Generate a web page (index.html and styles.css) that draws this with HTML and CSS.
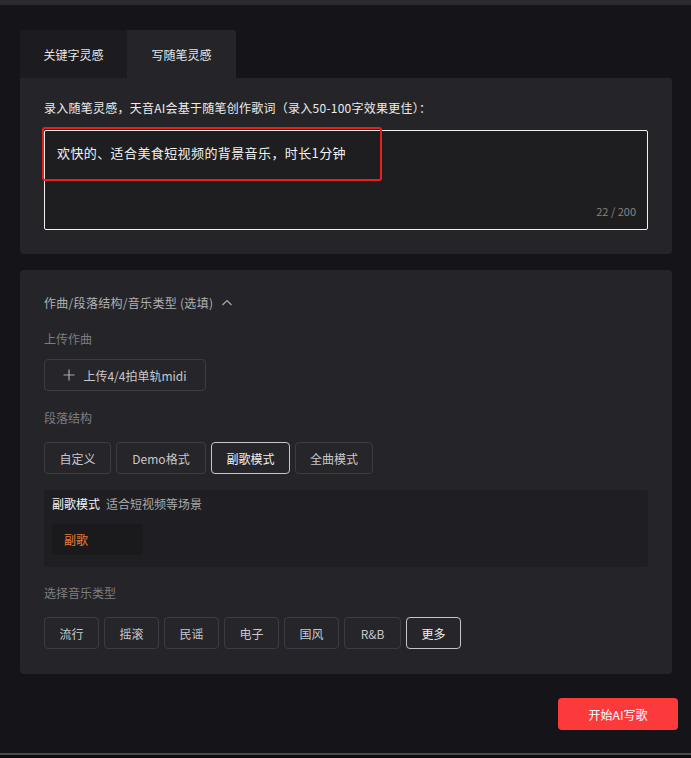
FILE: index.html
```html
<!DOCTYPE html>
<html lang="zh-CN">
<head>
    <meta charset="UTF-8">
    <meta name="viewport" content="width=device-width, initial-scale=1.0">
    <title>天音AI写歌</title>
    <link rel="stylesheet" href="styles.css">
</head>
<body>
    <div class="topbar"></div>
    <div class="page">
        <div class="tabs">
            <div class="tab">关键字灵感</div>
            <div class="tab active">写随笔灵感</div>
        </div>
        <div class="panel panel-input">
            <div class="label">录入随笔灵感，天音AI会基于随笔创作歌词（录入50-100字效果更佳）：</div>
            <div class="textarea">
                <div class="text">欢快的、适合美食短视频的背景音乐，时长1分钟</div>
                <div class="counter">22 / 200</div>
                <div class="highlight"></div>
            </div>
        </div>
        <div class="panel panel-options">
            <div class="section-title">作曲/段落结构/音乐类型 (选填)
                <svg class="chevron" width="12" height="12" viewBox="0 0 12 12"><path d="M1.5 8 L6 3.5 L10.5 8" fill="none" stroke="#aaa" stroke-width="1.2"/></svg>
            </div>
            <div class="sub-label">上传作曲</div>
            <button class="btn upload">
                <svg width="12" height="12" viewBox="0 0 12 12"><path d="M6 0.5 V11.5 M0.5 6 H11.5" stroke="#aaa" stroke-width="1.2"/></svg>
                上传4/4拍单轨midi
            </button>
            <div class="sub-label">段落结构</div>
            <div class="btn-row">
                <button class="btn seg w67">自定义</button>
                <button class="btn seg w90">Demo格式</button>
                <button class="btn seg w79 selected">副歌模式</button>
                <button class="btn seg w78">全曲模式</button>
            </div>
            <div class="mode-box">
                <div class="mode-head"><span class="mode-name">副歌模式</span>适合短视频等场景</div>
                <div class="chip">副歌</div>
            </div>
            <div class="sub-label">选择音乐类型</div>
            <div class="btn-row">
                <button class="btn genre">流行</button>
                <button class="btn genre">摇滚</button>
                <button class="btn genre">民谣</button>
                <button class="btn genre">电子</button>
                <button class="btn genre">国风</button>
                <button class="btn genre wide">R&amp;B</button>
                <button class="btn genre selected">更多</button>
            </div>
        </div>
        <div class="actions">
            <button class="start">开始AI写歌</button>
        </div>
    </div>
    <div class="bottombar"></div>
</body>
</html>
```

FILE: styles.css
```css
* {
    margin: 0;
    padding: 0;
    box-sizing: border-box;
}
body {
    width: 691px;
    height: 758px;
    overflow: hidden;
    background: #151419;
    font-family: "Noto Sans CJK SC", "Noto Sans", sans-serif;
    color: #e0e0e0;
    font-size: 12px;
}
.topbar {
    height: 5px;
    background: #2b2a2f;
}
.page {
    height: 748px;
    padding: 25px 19px 0 20px;
}
.tabs {
    display: flex;
    height: 48px;
}
.tab {
    width: 107px;
    display: flex;
    align-items: center;
    justify-content: center;
    font-size: 12px;
    color: #e6e6e6;
    background: #1c1c20;
    border-radius: 3px 0 0 0;
}
.tab.active {
    width: 109px;
    background: #252529;
    border-radius: 0 3px 0 0;
}
.panel {
    background: #252529;
    border-radius: 0 3px 4px 4px;
    padding: 0 24px;
}
.panel-input {
    height: 176px;
    padding-top: 21px;
}
.label {
    font-size: 12px;
    line-height: 18px;
    color: #ececec;
    letter-spacing: 0.25px;
}
.textarea {
    position: relative;
    margin-top: 13px;
    height: 100px;
    border: 1px solid #f0f0f0;
    border-radius: 2px;
    background: #1e1e21;
    padding: 12px 12px;
}
.text {
    font-size: 13px;
    line-height: 20px;
    color: #f2f2f2;
    letter-spacing: 0.4px;
}
.counter {
    position: absolute;
    right: 11px;
    bottom: 10px;
    font-size: 11px;
    color: #858585;
}
.highlight {
    position: absolute;
    left: -3px;
    top: -4px;
    width: 340px;
    height: 54px;
    border: 2px solid #e5201d;
    border-radius: 3px;
}
.panel-options {
    margin-top: 16px;
    height: 404px;
    border-radius: 4px;
    padding-top: 24px;
}
.section-title {
    display: flex;
    align-items: center;
    gap: 6px;
    color: #b0b0b0;
    line-height: 18px;
    letter-spacing: 0.3px;
}
.chevron {
    margin-left: 2px;
}
.sub-label {
    margin-top: 18px;
    color: #7d7d80;
    line-height: 18px;
}
.mode-box + .sub-label {
    margin-top: 17px;
}
.btn {
    font-family: inherit;
    font-size: 12px;
    color: #c8c8c8;
    background: #25252a;
    border: 1px solid #3c3c41;
    border-radius: 4px;
    height: 32px;
    display: flex;
    align-items: center;
    justify-content: center;
}
.upload {
    margin-top: 11px;
    width: 162px;
    gap: 8px;
}
.btn-row {
    display: flex;
    gap: 5px;
    margin-top: 15px;
}
.w67 { width: 67px; }
.w90 { width: 90px; }
.w79 { width: 79px; }
.w78 { width: 78px; }
.btn.selected {
    border-color: #c6c6c6;
    color: #f0f0f0;
}
.mode-box {
    margin-top: 16px;
    height: 77px;
    background: #1f1f23;
    border-radius: 3px;
    padding: 6px 8px;
}
.mode-head {
    color: #a9a9a9;
    line-height: 16px;
}
.mode-name {
    color: #f5f5f5;
    margin-right: 6px;
}
.chip {
    margin-top: 12px;
    width: 91px;
    height: 31px;
    background: #1a1a1d;
    border-radius: 3px;
    color: #ee7a36;
    padding-left: 12px;
    display: flex;
    align-items: center;
}
.genre {
    width: 55px;
}
.genre.wide {
    width: 57px;
}
.actions {
    display: flex;
    justify-content: flex-end;
    margin-top: 24px;
    margin-right: -6px;
}
.start {
    width: 120px;
    height: 32px;
    background: #fd3a3b;
    color: #fff;
    border: none;
    border-radius: 4px;
    font-family: inherit;
    font-size: 12px;
}
.bottombar {
    height: 5px;
    border-top: 2px solid #4a4a4e;
    background: #0d0d10;
}
```
